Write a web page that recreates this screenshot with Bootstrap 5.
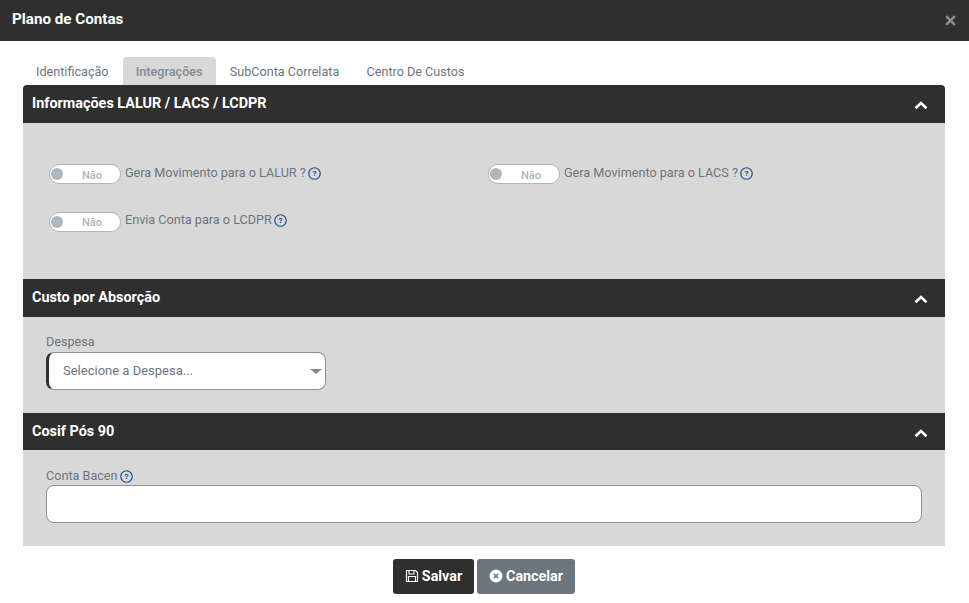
<!DOCTYPE html>
<html lang="pt">
<head>
<meta charset="utf-8">
<title>Plano de Contas</title>
<link href="https://cdn.jsdelivr.net/npm/bootstrap@5.3.0/dist/css/bootstrap.min.css" rel="stylesheet">
<style>
html,body{height:603px;overflow:hidden;background:#fff}
body{font-family:Roboto,"Liberation Sans",sans-serif;font-size:13px;color:#6c757d}
.dlg-head{height:41px;background:#2f2f2f;padding:0 13px 3px 12px}
.dlg-title{font-size:15.2px;font-weight:700;color:#fff;margin:0;line-height:18px}
.dlg-x{width:11px;height:11px;display:block;margin-top:3px}
.dlg-body{padding:16px 24px 0 23px}
.tabs-row{height:28px}
.tab-item{padding:0 13px;margin-right:1.2px;line-height:30px;height:28px;font-size:12.64px;color:#6c757d;border-radius:4px 4px 0 0}
.tab-item.act{background:#d8d8d8;font-weight:500;color:#858b91}
.sec-head{background:#2f2f2f;color:#fff;font-weight:700;font-size:14.4px;padding:0 17px 0 9px}
.sec-head span{line-height:18px}
.sec-head svg{margin-top:2px}
.sec-head.first{height:38px;border-radius:4px 4px 0 0}
.sec-head.two{height:38px}
.sec-head.three{height:37px}
.sec-head.three span{margin-top:1px}
.sec-head.three svg{margin-top:3px}
.sec-body{background:#d8d8d8}
.b1{height:156px;padding:0 0 6px 26px}
.b2{height:96px;padding:17px 23px 0}
.b3{height:96px;padding:18px 23px 0}
.sw-row{height:48px}
.sw-cell{width:439px;height:48px;flex:none}
.swt{width:72px;height:20px;background:#fff;border:1px solid #adb5bd;border-radius:10px;position:relative;flex:none}
.swt-knob{position:absolute;left:1px;top:2.5px;width:12px;height:12px;border-radius:50%;background:#adb5bd}
.swt-txt{position:absolute;left:32px;top:4px;font-size:11px;font-weight:500;color:#adb5bd;line-height:14px}
.sw-lbl{margin-left:4px;margin-bottom:3px;font-size:12.64px;line-height:16px;color:#6c757d;white-space:nowrap}
.qm{width:13px;height:13px;margin-left:2.5px;margin-bottom:2px;flex:none;display:block}
.lower-row .sw-lbl{margin-bottom:5px}
.lower-row .qm{margin-bottom:4px}
.lower-row .swt-txt{top:3px}
.fld-lbl{font-size:12.64px;line-height:16px;color:#6c757d;margin-bottom:2px}
.fld-lbl.tight{margin-bottom:1px}
.fld-lbl .qm{margin-left:2px;margin-bottom:0}
.sel-box{width:280px;height:38px;background:#fff;border:1px solid #8f8f8f;border-left:3px solid #2f2f2f;border-radius:8px;padding:0 3px 0 14px;font-size:13px;color:#6c757d}
.sel-caret{width:0;height:0;border-left:6px solid transparent;border-right:6px solid transparent;border-top:5px solid #888}
.txt-box{height:38px;background:#fff;border:1px solid #8f8f8f;border-radius:8px;width:876px}
.foot{padding-top:13px;gap:3px}
.act-btn{height:35px;border:0;border-radius:3px;color:#fff;font-weight:700;font-size:14.3px;padding:0 0 1px;line-height:1}
.act-btn:hover,.act-btn:focus{color:#fff}
.btn-sv{width:81px;background:#2f2f2f}
.btn-sv:hover{background:#2f2f2f}
.btn-cc{width:98px;background:#6c757d}
.btn-cc:hover{background:#6c757d}
.ic{width:14px;height:14px;margin-right:3px;flex:none;display:block}
</style>
</head>
<body>
<div class="dlg-head d-flex align-items-center justify-content-between">
  <h5 class="dlg-title">Plano de Contas</h5>
  <svg class="dlg-x" viewBox="0 0 11 11" aria-hidden="true"><path d="M1.2 1.2L9.8 9.8M9.8 1.2L1.2 9.8" stroke="#8d8d8d" stroke-width="2.6" fill="none"/></svg>
</div>
<div class="dlg-body">
  <div class="tabs-row d-flex">
    <div class="tab-item">Identificação</div>
    <div class="tab-item act">Integrações</div>
    <div class="tab-item">SubConta Correlata</div>
    <div class="tab-item">Centro De Custos</div>
  </div>

  <div class="sec-head first d-flex align-items-center justify-content-between">
    <span>Informações LALUR / LACS / LCDPR</span>
    <svg width="14" height="9" viewBox="0 0 14 9" aria-hidden="true"><path d="M1.5 7.2L7 2l5.5 5.2" stroke="#fff" stroke-width="2.6" fill="none"/></svg>
  </div>
  <div class="sec-body b1 d-flex flex-column justify-content-center">
    <div class="sw-row d-flex align-items-center">
      <div class="sw-cell d-flex align-items-center">
        <div class="swt"><span class="swt-knob"></span><span class="swt-txt">Não</span></div>
        <span class="sw-lbl">Gera Movimento para o LALUR ?</span>
        <svg class="qm" viewBox="0 0 12 12" aria-hidden="true"><circle cx="6" cy="6" r="5.3" fill="none" stroke="#1f4e8c" stroke-width="1.1"/><text x="6" y="8.6" text-anchor="middle" font-size="7.5" font-weight="700" fill="#1f4e8c" font-family="Roboto">?</text></svg>
      </div>
      <div class="sw-cell d-flex align-items-center">
        <div class="swt"><span class="swt-knob"></span><span class="swt-txt">Não</span></div>
        <span class="sw-lbl">Gera Movimento para o LACS ?</span>
        <svg class="qm" viewBox="0 0 12 12" aria-hidden="true"><circle cx="6" cy="6" r="5.3" fill="none" stroke="#1f4e8c" stroke-width="1.1"/><text x="6" y="8.6" text-anchor="middle" font-size="7.5" font-weight="700" fill="#1f4e8c" font-family="Roboto">?</text></svg>
      </div>
    </div>
    <div class="sw-row lower-row d-flex align-items-center">
      <div class="sw-cell d-flex align-items-center">
        <div class="swt"><span class="swt-knob"></span><span class="swt-txt">Não</span></div>
        <span class="sw-lbl">Envia Conta para o LCDPR</span>
        <svg class="qm" viewBox="0 0 12 12" aria-hidden="true"><circle cx="6" cy="6" r="5.3" fill="none" stroke="#1f4e8c" stroke-width="1.1"/><text x="6" y="8.6" text-anchor="middle" font-size="7.5" font-weight="700" fill="#1f4e8c" font-family="Roboto">?</text></svg>
      </div>
    </div>
  </div>

  <div class="sec-head two d-flex align-items-center justify-content-between">
    <span>Custo por Absorção</span>
    <svg width="14" height="9" viewBox="0 0 14 9" aria-hidden="true"><path d="M1.5 7.2L7 2l5.5 5.2" stroke="#fff" stroke-width="2.6" fill="none"/></svg>
  </div>
  <div class="sec-body b2">
    <div class="fld-lbl">Despesa</div>
    <div class="sel-box d-flex align-items-center justify-content-between">
      <span>Selecione a Despesa...</span><span class="sel-caret"></span>
    </div>
  </div>

  <div class="sec-head three d-flex align-items-center justify-content-between">
    <span>Cosif Pós 90</span>
    <svg width="14" height="9" viewBox="0 0 14 9" aria-hidden="true"><path d="M1.5 7.2L7 2l5.5 5.2" stroke="#fff" stroke-width="2.6" fill="none"/></svg>
  </div>
  <div class="sec-body b3">
    <div class="fld-lbl tight d-flex align-items-center">Conta Bacen
      <svg class="qm" viewBox="0 0 12 12" aria-hidden="true"><circle cx="6" cy="6" r="5.3" fill="none" stroke="#1f4e8c" stroke-width="1.1"/><text x="6" y="8.6" text-anchor="middle" font-size="7.5" font-weight="700" fill="#1f4e8c" font-family="Roboto">?</text></svg>
    </div>
    <div class="txt-box"></div>
  </div>

  <div class="foot d-flex justify-content-center">
    <button type="button" class="btn act-btn btn-sv d-flex align-items-center justify-content-center">
      <svg class="ic" viewBox="0 0 14 14" aria-hidden="true"><path d="M1.5 1.5h9l2 2v9h-11z" fill="none" stroke="#fff" stroke-width="1.2"/><path d="M4 1.5v3.5h5v-3.5M3.5 12.5v-5h7v5" fill="none" stroke="#fff" stroke-width="1.1"/></svg>Salvar
    </button>
    <button type="button" class="btn act-btn btn-cc d-flex align-items-center justify-content-center">
      <svg class="ic" viewBox="0 0 14 14" aria-hidden="true"><circle cx="7" cy="7" r="6.5" fill="#fff"/><path d="M4.8 4.8l4.4 4.4M9.2 4.8l-4.4 4.4" stroke="#6c757d" stroke-width="1.5"/></svg>Cancelar
    </button>
  </div>
</div>
<script src="https://cdn.jsdelivr.net/npm/bootstrap@5.3.0/dist/js/bootstrap.bundle.min.js"></script>
</body>
</html>
